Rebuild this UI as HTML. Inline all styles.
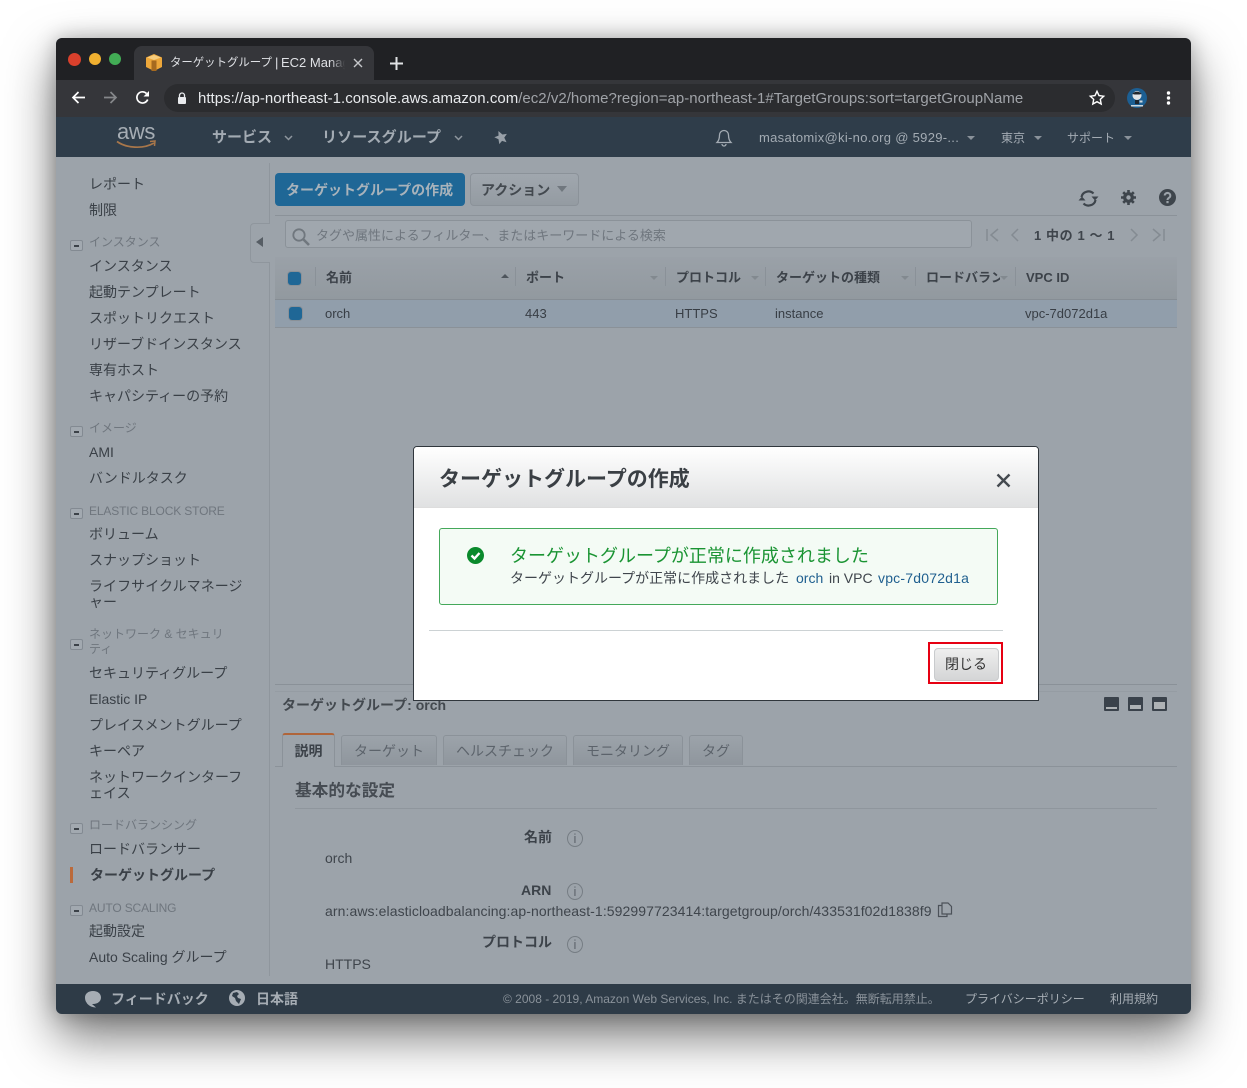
<!DOCTYPE html>
<html lang="ja"><head><meta charset="utf-8"><title>ターゲットグループ | EC2 Management Console</title>
<style>
html,body{margin:0;padding:0;background:#fff;width:1247px;height:1088px;overflow:hidden}
body{position:relative;font-family:"Liberation Sans","Noto Sans CJK JP",sans-serif;font-size:14px;color:#383e45}
.t{position:absolute;white-space:nowrap;line-height:18px}
.b{position:absolute}
svg{position:absolute;overflow:visible}
#win{position:absolute;left:56px;top:38px;width:1135px;height:976px;border-radius:6px;box-shadow:0 22px 50px rgba(0,0,0,.55),0 0 20px rgba(0,0,0,.25);background:#9ca3aa}
#clip{position:absolute;left:56px;top:38px;width:1135px;height:976px;border-radius:6px;overflow:hidden}
.s{left:33px;color:#3a4047;font-size:14px}
.g{left:33px;color:#6f767e;font-size:12px}
.mn{position:absolute;left:14px;width:11px;height:9px;border:1px solid #838a92;border-radius:2px;background:#a2a9b0}
.mn:after{content:"";position:absolute;left:3px;top:4px;width:5px;height:2px;background:#3c4249}
.h{font-weight:700;color:#3c4249;font-size:13px;top:231px}
.sep{position:absolute;top:229px;width:1px;height:19px;background:#8a9198}
.ar{position:absolute;top:238px;width:0;height:0;border-left:4px solid transparent;border-right:4px solid transparent;border-top:4px solid #82898f}
.tab{position:absolute;top:697px;height:30px;border:1px solid #8b9299;border-bottom:0;border-radius:3px 3px 0 0;background:linear-gradient(#9ca3aa,#8f969d);color:#5c636b;font-size:14px;text-align:center;line-height:30px;box-sizing:border-box}
.nav{color:#a3abb3;font-size:15px;font-weight:700}
.i{position:absolute;width:14px;height:15px;border:1.5px solid #767d84;border-radius:50%;color:#5e656c;font:400 13px/15px "Liberation Sans",sans-serif;text-align:center;left:511px}
.f{color:#a6adb4;font-size:12px}
.win3{position:absolute;top:659px;width:15px;height:14px;background:#3a424b;border-radius:1px}
.win3 i{position:absolute;left:2px;right:2px;bottom:2px;background:#aeb2b5}
</style></head>
<body>
<div id="win"></div>
<div id="clip">
<!-- tab strip -->
<div class="b" style="left:0;top:0;width:1135px;height:42px;background:#202124"></div>
<div class="b" style="left:12px;top:15px;width:13px;height:13px;border-radius:50%;background:#d9402c"></div>
<div class="b" style="left:33px;top:15px;width:12px;height:12px;border-radius:50%;background:#f0b030"></div>
<div class="b" style="left:53px;top:15px;width:12px;height:12px;border-radius:50%;background:#42ac55"></div>
<div class="b" style="left:78px;top:8px;width:240px;height:34px;background:#35363a;border-radius:8px 8px 0 0"></div>
<svg style="left:90px;top:16px" width="16" height="17" viewBox="0 0 16 17"><path d="M0 3.500 8 0l8 3.500V13l-8 4-8-4z" fill="#eda73a"/><path d="M5.500 6.500h5V17h-5z" fill="#a66a1f"/><path d="M1 3.500 8 1l7 2.500L8 6z" fill="#f6cc7d"/></svg>
<div class="t" style="left:114px;top:16px;color:#dfe1e5;font-size:11.400px">ターゲットグループ</div>
<div class="t" style="left:219px;top:16px;color:#dfe1e5;font-size:13px">|</div>
<div class="t" style="left:225px;top:16px;width:64px;overflow:hidden;color:#dfe1e5;font-size:13px">EC2 Manag</div>
<div class="b" style="left:274px;top:15px;width:15px;height:18px;background:linear-gradient(90deg,rgba(53,54,58,0),#35363a)"></div>
<svg style="left:297px;top:20px" width="10" height="10"><path d="M1 1l8 8M9 1l-8 8" stroke="#c5c7ca" stroke-width="1.400"/></svg>
<svg style="left:334px;top:19px" width="13" height="13"><path d="M6.500 0v13M0 6.500h13" stroke="#e0e2e5" stroke-width="2"/></svg>
<!-- toolbar -->
<div class="b" style="left:0;top:42px;width:1135px;height:37px;background:#35363a"></div>
<svg style="left:15px;top:52px" width="15" height="15" viewBox="0 0 15 15"><path d="M14 7.500H2M7.500 2 2 7.500 7.500 13" fill="none" stroke="#fff" stroke-width="1.700"/></svg>
<svg style="left:47px;top:52px" width="15" height="15" viewBox="0 0 15 15"><path d="M1 7.500h12M7.500 2 13 7.500 7.500 13" fill="none" stroke="#85878a" stroke-width="1.700"/></svg>
<svg style="left:79px;top:52px" width="15" height="15" viewBox="0 0 15 15"><path d="M12.700 9.500A5.600 5.600 0 1 1 11.500 3.500" fill="none" stroke="#fff" stroke-width="1.700"/><path d="M14 1v5.500H8.500z" fill="#fff"/></svg>
<div class="b" style="left:108px;top:46px;width:951px;height:28px;border-radius:14px;background:#2b2c2f"></div>
<svg style="left:121px;top:54px" width="10" height="12" viewBox="0 0 10 12"><path d="M2.500 5V3.500a2.500 2.500 0 0 1 5 0V5" fill="none" stroke="#e8eaed" stroke-width="1.300"/><rect x="1" y="5" width="8" height="7" rx="1" fill="#e8eaed"/></svg>
<div class="t" style="left:142px;top:52px;font-size:15px;letter-spacing:.02px;color:#e8eaed">https://ap-northeast-1.console.aws.amazon.com<span style="color:#a0a3a8">/ec2/v2/home?region=ap-northeast-1#TargetGroups:sort=targetGroupName</span></div>
<svg style="left:1033px;top:52px" width="16" height="15" viewBox="0 0 16 15"><path d="M8 1.300l2 4.300 4.700.6-3.400 3.200.9 4.600L8 11.700 3.800 14l.9-4.600L1.300 6.200 6 5.600z" fill="none" stroke="#fff" stroke-width="1.400"/></svg>
<svg style="left:1071px;top:50px" width="20" height="20" viewBox="0 0 20 20"><circle cx="10" cy="10" r="10" fill="#1c5f93"/><circle cx="10" cy="7.500" r="4.500" fill="#dfe3e6"/><path d="M5.500 6c1-3 8-3 9 0l-2 .5h-5z" fill="#20262c"/><path d="M8 12h4v4H8z" fill="#1d2630"/><path d="M4 17h12v1.500H4zM12.500 12.500h3v2h-3z" fill="#cfd8de"/></svg>
<svg style="left:1110px;top:53px" width="5" height="14"><circle cx="2.500" cy="2" r="1.700" fill="#fff"/><circle cx="2.500" cy="7" r="1.700" fill="#fff"/><circle cx="2.500" cy="12" r="1.700" fill="#fff"/></svg>
<!-- aws nav -->
<div class="b" style="left:0;top:79px;width:1135px;height:40px;background:#2f3d4a"></div>
<div class="t" style="left:61px;top:82px;font-size:22px;line-height:24px;color:#a6adb4;letter-spacing:-.4px">aws</div>
<svg style="left:60px;top:102px" width="42" height="10" viewBox="0 0 42 10"><path d="M1 1.500C10 8 27 9.500 38 3" fill="none" stroke="#a9774a" stroke-width="1.700"/><path d="M34 1.500l5-.5-.500 5" fill="none" stroke="#a9774a" stroke-width="1.500"/></svg>
<div class="t nav" style="left:156px;top:91px">サービス</div>
<svg style="left:228px;top:97px" width="9" height="6"><path d="M1 1l3.500 3.500L8 1" fill="none" stroke="#8e969e" stroke-width="1.500"/></svg>
<div class="t nav" style="left:266px;top:91px;letter-spacing:.1px">リソースグループ</div>
<svg style="left:398px;top:97px" width="9" height="6"><path d="M1 1l3.500 3.500L8 1" fill="none" stroke="#8e969e" stroke-width="1.500"/></svg>
<svg style="left:438px;top:92px" width="14" height="14" viewBox="0 0 14 14"><path d="M6 .5 9 5l4.500.5L10 8.500l1 5-4-2.500-3.500 2.500L4 8.500.5 5.500 5 5z" fill="#98a0a8" transform="rotate(-15 7 7)"/></svg>
<svg style="left:660px;top:91px" width="16" height="18" viewBox="0 0 16 18"><path d="M8 1.500a4.500 4.500 0 0 0-4.500 4.500c0 4-1 6-2.500 7.500h14C13.500 12 12.500 10 12.500 6A4.500 4.500 0 0 0 8 1.500zM6 15a2 2 0 0 0 4 0" fill="none" stroke="#a3abb3" stroke-width="1.300"/></svg>
<div class="t" style="left:703px;top:91px;font-size:13px;color:#a3abb3;letter-spacing:.3px">masatomix@ki-no.org @ 5929-...</div>
<div class="ar" style="left:911px;top:98px;border-top-color:#8a929a"></div>
<div class="t" style="left:945px;top:91px;font-size:12px;color:#a3abb3">東京</div>
<div class="ar" style="left:978px;top:98px;border-top-color:#8a929a"></div>
<div class="t" style="left:1011px;top:91px;font-size:12px;color:#a3abb3">サポート</div>
<div class="ar" style="left:1068px;top:98px;border-top-color:#8a929a"></div>
<!-- content -->
<div class="b" style="left:0;top:119px;width:1135px;height:827px;background:#9ca3aa"></div>
<div class="b" style="left:213px;top:125px;width:1px;height:813px;background:#8f969d"></div>
<div class="b" style="left:194px;top:185px;width:19px;height:38px;background:#9ca3aa;border:1px solid #8f969d;border-right:0;border-radius:4px 0 0 4px"></div>
<div class="b" style="left:200px;top:199px;width:0;height:0;border-top:5px solid transparent;border-bottom:5px solid transparent;border-right:7px solid #565d64"></div>
<!-- sidebar -->
<div class="t s" style="top:137px">レポート</div>
<div class="t s" style="top:163px">制限</div>
<div class="mn" style="top:202px"></div><div class="t g" style="top:195px">インスタンス</div>
<div class="t s" style="top:219px">インスタンス</div>
<div class="t s" style="top:245px">起動テンプレート</div>
<div class="t s" style="top:271px">スポットリクエスト</div>
<div class="t s" style="top:297px">リザーブドインスタンス</div>
<div class="t s" style="top:323px">専有ホスト</div>
<div class="t s" style="top:349px">キャパシティーの予約</div>
<div class="mn" style="top:388px"></div><div class="t g" style="top:381px">イメージ</div>
<div class="t s" style="top:405px">AMI</div>
<div class="t s" style="top:431px">バンドルタスク</div>
<div class="mn" style="top:470px"></div><div class="t g" style="top:464px;letter-spacing:-.15px">ELASTIC BLOCK STORE</div>
<div class="t s" style="top:487px">ボリューム</div>
<div class="t s" style="top:513px">スナップショット</div>
<div class="t s" style="top:539px;letter-spacing:.05px">ライフサイクルマネージ</div>
<div class="t s" style="top:555px">ャー</div>
<div class="mn" style="top:601px"></div>
<div class="t g" style="top:587px">ネットワーク &amp; セキュリ</div>
<div class="t g" style="top:602px">ティ</div>
<div class="t s" style="top:626px">セキュリティグループ</div>
<div class="t s" style="top:652px">Elastic IP</div>
<div class="t s" style="top:678px">プレイスメントグループ</div>
<div class="t s" style="top:704px">キーペア</div>
<div class="t s" style="top:730px">ネットワークインターフ</div>
<div class="t s" style="top:746px">ェイス</div>
<div class="mn" style="top:785px"></div><div class="t g" style="top:778px">ロードバランシング</div>
<div class="t s" style="top:802px">ロードバランサー</div>
<div class="b" style="left:14px;top:829px;width:3px;height:16px;background:#bb6a3b"></div>
<div class="t s" style="top:828px;font-weight:700;left:34px">ターゲットグループ</div>
<div class="mn" style="top:867px"></div><div class="t g" style="top:861px;letter-spacing:-.15px">AUTO SCALING</div>
<div class="t s" style="top:884px">起動設定</div>
<div class="t s" style="top:910px">Auto Scaling グループ</div>
<!-- action bar -->
<div class="b" style="left:219px;top:135px;width:190px;height:33px;border-radius:4px;background:#1f6796;box-sizing:border-box"></div>
<div class="t" style="left:230px;top:143px;color:#a9b3bb;font-weight:700;font-size:14px">ターゲットグループの作成</div>
<div class="b" style="left:414px;top:135px;width:109px;height:33px;border:1px solid #8b9299;border-radius:4px;box-sizing:border-box;background:linear-gradient(#a0a7ae,#949ba2)"></div>
<div class="t" style="left:425px;top:143px;color:#43494f;font-weight:700;font-size:14px">アクション</div>
<div class="ar" style="left:501px;top:148px;border-left-width:5px;border-right-width:5px;border-top:6px solid #70777e"></div>
<svg style="left:1022px;top:152px" width="21" height="17" viewBox="0 0 21 17"><path d="M3.500 7A7 6.500 0 0 1 15.500 3.500M17.500 10A7 6.500 0 0 1 5.500 13.500" fill="none" stroke="#3e454c" stroke-width="2.200"/><path d="M13.500 6.500h7L17 10.500zM.5 10.500h7L4 6.500z" fill="#3e454c"/></svg>
<svg style="left:1064px;top:151px" width="17" height="17" viewBox="0 0 17 17"><path d="M8.500 1v15M1 8.500h15M3.200 3.200l10.600 10.600M13.800 3.200 3.200 13.800" stroke="#3e454c" stroke-width="2.600"/><circle cx="8.500" cy="8.500" r="5.400" fill="#3e454c"/><circle cx="8.500" cy="8.500" r="2.200" fill="#9ca3aa"/></svg>
<svg style="left:1103px;top:151px" width="17" height="17" viewBox="0 0 17 17"><circle cx="8.500" cy="8.500" r="8.500" fill="#3e454c"/><path d="M5.700 6.500a2.800 2.600 0 1 1 4.400 2.200c-1 .7-1.600 1.100-1.600 2.300" fill="none" stroke="#9ca3aa" stroke-width="2"/><rect x="7.400" y="12" width="2.200" height="2.200" fill="#9ca3aa"/></svg>
<!-- filter bar -->
<div class="b" style="left:219px;top:177px;width:902px;height:41px;background:#9ca3aa;border-top:1px solid #8b9299;border-bottom:1px solid #8b9299"></div>
<div class="b" style="left:229px;top:182px;width:687px;height:28px;border:1px solid #8b9299;border-radius:3px;background:#a0a7ae;box-sizing:border-box"></div>
<svg style="left:236px;top:190px" width="18" height="18" viewBox="0 0 18 18"><circle cx="7" cy="7" r="5.700" fill="none" stroke="#70777e" stroke-width="1.800"/><path d="M11 11l6 6" stroke="#70777e" stroke-width="2.600"/></svg>
<div class="t" style="left:260px;top:189px;color:#6f767e;font-size:13px">タグや属性によるフィルター、またはキーワードによる検索</div>
<svg style="left:929px;top:190px" width="180" height="15" fill="none" stroke="#848b92" stroke-width="1.500"><path d="M2 1v12M13 1 6 7l7 6M33 1 27 7l6 6M146 1l6 6-6 6M168 1l7 6-7 6M179 1v12"/></svg>
<div class="t" style="left:978px;top:189px;color:#3e444b;font-size:13px;font-weight:700;letter-spacing:.6px">1 中の 1 〜 1</div>
<!-- table header -->
<div class="b" style="left:219px;top:219px;width:902px;height:42px;background:linear-gradient(#9aa1a8,#92999f);border-bottom:1px solid #868d94"></div>
<div class="b" style="left:232px;top:234px;width:13px;height:13px;background:#1f6796;border-radius:3px;box-shadow:0 0 0 1px #8a9198"></div>
<div class="sep" style="left:259px"></div><div class="sep" style="left:459px"></div><div class="sep" style="left:609px"></div><div class="sep" style="left:709px"></div><div class="sep" style="left:859px"></div><div class="sep" style="left:959px"></div>
<div class="t h" style="left:270px">名前</div>
<div class="b" style="left:445px;top:236px;width:0;height:0;border-left:4px solid transparent;border-right:4px solid transparent;border-bottom:4px solid #4e555c"></div>
<div class="t h" style="left:470px">ポート</div><div class="ar" style="left:594px"></div>
<div class="t h" style="left:620px">プロトコル</div><div class="ar" style="left:695px"></div>
<div class="t h" style="left:720px">ターゲットの種類</div><div class="ar" style="left:845px"></div>
<div class="t h" style="left:870px;width:74px;overflow:hidden">ロードバラン</div><div class="ar" style="left:944px"></div>
<div class="t h" style="left:970px">VPC ID</div>
<!-- row -->
<div class="b" style="left:219px;top:262px;width:902px;height:27px;background:#919eab;border-bottom:1px solid #8a9198"></div>
<div class="b" style="left:233px;top:269px;width:13px;height:13px;background:#1f6796;border-radius:3px;box-shadow:0 0 0 1px #8a9198"></div>
<div class="t" style="left:269px;top:267px;font-size:13px">orch</div>
<div class="t" style="left:469px;top:267px;font-size:13px">443</div>
<div class="t" style="left:619px;top:267px;font-size:13px">HTTPS</div>
<div class="t" style="left:719px;top:267px;font-size:13px">instance</div>
<div class="t" style="left:969px;top:267px;font-size:13px">vpc-7d072d1a</div>
<!-- detail pane -->
<div class="b" style="left:219px;top:646px;width:902px;height:1px;background:#8a9198"></div>
<div class="b" style="left:219px;top:653px;width:902px;height:1px;background:#959ca3"></div>
<div class="t" style="left:226px;top:658px;color:#43494f;font-weight:700;font-size:14px">ターゲットグループ: orch</div>
<div class="win3" style="left:1048px"><i style="height:2px"></i></div>
<div class="win3" style="left:1072px"><i style="height:4px"></i></div>
<div class="win3" style="left:1096px"><i style="height:7px"></i></div>
<div class="b" style="left:219px;top:728px;width:902px;height:1px;background:#8b9299"></div>
<div class="b" style="left:226px;top:695px;width:53px;height:34px;border:1px solid #8b9299;border-top:2px solid #b0653a;border-bottom:0;border-radius:3px 3px 0 0;background:#9ca3aa;box-sizing:border-box;text-align:center;font-size:14px;line-height:32px;color:#3c4249;font-weight:700">説明</div>
<div class="tab" style="left:285px;width:96px">ターゲット</div>
<div class="tab" style="left:387px;width:124px">ヘルスチェック</div>
<div class="tab" style="left:517px;width:110px">モニタリング</div>
<div class="tab" style="left:633px;width:54px">タグ</div>
<div class="t" style="left:239px;top:743px;color:#464c53;font-weight:700;font-size:16.700px;line-height:20px">基本的な設定</div>
<div class="b" style="left:239px;top:770px;width:862px;height:1px;background:#8f969d"></div>
<div class="t" style="left:468px;top:790px;color:#3c4249;font-weight:700;font-size:14px">名前</div>
<div class="i" style="top:792px">i</div>
<div class="t" style="left:269px;top:811px;color:#3f454c">orch</div>
<div class="t" style="left:465px;top:843px;color:#3c4249;font-weight:700;font-size:14px">ARN</div>
<div class="i" style="top:845px">i</div>
<div class="t" style="left:269px;top:864px;color:#3f454c;letter-spacing:.09px;font-size:14px">arn:aws:elasticloadbalancing:ap-northeast-1:592997723414:targetgroup/orch/433531f02d1838f9</div>
<svg style="left:881px;top:864px" width="16" height="16" viewBox="0 0 16 16" fill="none" stroke="#4c5259" stroke-width="1.200"><path d="M5 3.500H1.500v11H10V12"/><path d="M5 1h6l3.500 3.500V12H5z"/></svg>
<div class="t" style="left:426px;top:895px;color:#3c4249;font-weight:700;font-size:14px">プロトコル</div>
<div class="i" style="top:898px">i</div>
<div class="t" style="left:269px;top:917px;color:#3f454c">HTTPS</div>
<!-- footer -->
<div class="b" style="left:0;top:946px;width:1135px;height:30px;background:#2e3b47"></div>
<svg style="left:28px;top:952px" width="18" height="18" viewBox="0 0 18 18"><path d="M9 1c4.700 0 8 2.700 8 6.500S13.700 14 9 14l-1 0 4 3.500c-4 0-8-2-9.500-5C1.500 11.200 1 9.500 1 7.500 1 3.700 4.300 1 9 1z" fill="#a6adb4"/></svg>
<div class="t" style="left:55px;top:952px;color:#a6adb4;font-weight:700;font-size:14px">フィードバック</div>
<svg style="left:173px;top:952px" width="16" height="16" viewBox="0 0 16 16"><circle cx="8" cy="8" r="8" fill="#a6adb4"/><path d="M4 3l4-1 2 2-2 2 1 2 3 1-2 5-3-3-1-3-3-2z" fill="#2e3b47"/></svg>
<div class="t" style="left:200px;top:952px;color:#a6adb4;font-weight:700;font-size:14px">日本語</div>
<div class="t f" style="left:447px;top:952px;color:#8a929a">© 2008 - 2019, Amazon Web Services, Inc. またはその関連会社。無断転用禁止。</div>
<div class="t f" style="left:909px;top:952px">プライバシーポリシー</div>
<div class="t f" style="left:1054px;top:952px">利用規約</div>
<!-- modal -->
<div class="b" style="left:357px;top:408px;width:626px;height:255px;background:#fff;border:1px solid #30363c;border-radius:4px 4px 0 0;box-sizing:border-box"></div>
<div class="b" style="left:358px;top:409px;width:624px;height:60px;background:linear-gradient(#fff,#e0e1e2);border-radius:3px 3px 0 0;border-bottom:1px solid #ddd"></div>
<div class="t" style="left:383px;top:429px;font-size:21px;line-height:26px;font-weight:700;color:#3a3f44">ターゲットグループの作成</div>
<svg style="left:940px;top:435px" width="15" height="15"><path d="M1.500 1.500l12 12M13.500 1.500l-12 12" stroke="#454a50" stroke-width="2.400"/></svg>
<div class="b" style="left:383px;top:490px;width:559px;height:77px;border:1px solid #44a85a;border-radius:3px;background:#f4fbf5;box-sizing:border-box"></div>
<svg style="left:411px;top:509px" width="17" height="17" viewBox="0 0 17 17"><circle cx="8.500" cy="8.500" r="8.500" fill="#0a8a2c"/><path d="M4.500 8.500l3 3 5-5.500" fill="none" stroke="#fff" stroke-width="2.400"/></svg>
<div class="t" style="left:454px;top:506px;font-size:18px;line-height:24px;color:#1a9433">ターゲットグループが正常に作成されました</div>
<div class="t" style="left:454px;top:531px;font-size:14px;color:#3f454c">ターゲットグループが正常に作成されました</div>
<div class="t" style="left:740px;top:531px;font-size:14px;color:#1f5f8f">orch</div>
<div class="t" style="left:773px;top:531px;font-size:14px;color:#3f454c">in VPC</div>
<div class="t" style="left:822px;top:531px;font-size:14px;color:#1f5f8f;letter-spacing:.2px">vpc-7d072d1a</div>
<div class="b" style="left:373px;top:592px;width:574px;height:1px;background:#ccd2d4"></div>
<div class="b" style="left:872px;top:604px;width:75px;height:42px;border:2px solid #e60012;box-sizing:border-box"></div>
<div class="b" style="left:878px;top:610px;width:65px;height:33px;border:1px solid #c9cbcd;border-radius:4px;box-sizing:border-box;background:linear-gradient(#eeeeee,#d4d5d6)"></div>
<div class="t" style="left:889px;top:617px;color:#333;font-size:14px">閉じる</div>
</div>
</body></html>
